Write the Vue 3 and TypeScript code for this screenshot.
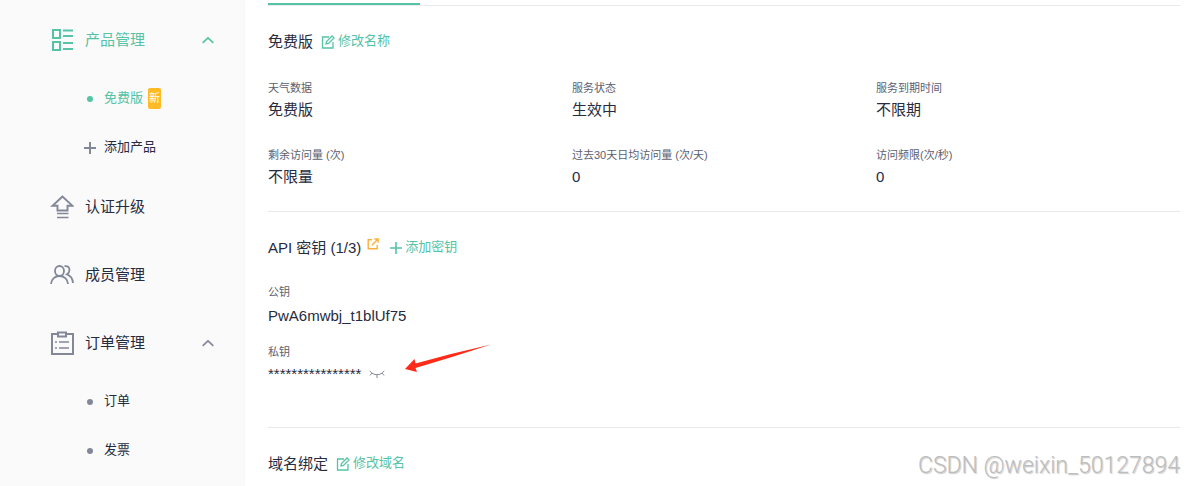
<script setup lang="ts">
interface SubItem {
  label: string
  active?: boolean
  add?: boolean
  badge?: string
}
interface MenuItem {
  label: string
  icon: 'product' | 'upgrade' | 'members' | 'orders'
  active?: boolean
  children?: SubItem[]
}

const menu: MenuItem[] = [
  {
    label: '产品管理',
    icon: 'product',
    active: true,
    children: [
      { label: '免费版', active: true, badge: '新' },
      { label: '添加产品', add: true },
    ],
  },
  { label: '认证升级', icon: 'upgrade' },
  { label: '成员管理', icon: 'members' },
  { label: '订单管理', icon: 'orders', children: [{ label: '订单' }, { label: '发票' }] },
]

const stats = [
  { label: '天气数据', value: '免费版' },
  { label: '服务状态', value: '生效中' },
  { label: '服务到期时间', value: '不限期' },
  { label: '剩余访问量 (次)', value: '不限量' },
  { label: '过去30天日均访问量 (次/天)', value: '0' },
  { label: '访问频限(次/秒)', value: '0' },
]
</script>

<template>
  <div class="page">
    <nav class="sidebar">
      <div v-for="item in menu" :key="item.label" class="group">
        <button type="button" class="item" :class="{ active: item.active }">
          <svg class="item-icon" viewBox="0 0 24 24" width="24" height="24" fill="none" stroke="currentColor" stroke-width="2">
            <template v-if="item.icon === 'product'">
              <path d="M3 2h7v8H3zM3 14h7v8H3z" />
              <path d="M13 2.500h10M13 8h10M13 15h10M13 21h10" stroke-width="1.800" />
            </template>
            <template v-else-if="item.icon === 'upgrade'">
              <path d="M12.500 1.500 2.500 10.800h5v4.700h10v-4.700h5z" stroke-width="1.900" />
              <path d="M7 18.500h11.500M7 22.500h11.500" stroke-width="1.700" />
            </template>
            <template v-else-if="item.icon === 'members'">
              <g stroke-width="1.800">
                <ellipse cx="9.500" cy="8" rx="4.500" ry="5" />
                <path d="M1 21c.3-5 4-8 8.500-8s8.200 3 8.500 8M14.500 3.200c3-.7 5 1 5 3.800 0 2-.9 3.300-2.500 4.300 3.400 1.200 5.700 4.500 6 8.700" />
              </g>
            </template>
            <template v-else>
              <path d="M8 3H2v20h21V3H16" />
              <path d="M8 1.500h8v4H8z" />
              <path d="M5 11h2M9 11h10M5 17h2M9 17h10" stroke-width="1.700" />
            </template>
          </svg>
          <span class="item-text">{{ item.label }}</span>
          <svg v-if="item.children" class="chevron" viewBox="0 0 12 8" width="12" height="8" fill="none" stroke="currentColor" stroke-width="1.700">
            <path d="m.7 6.800 5.300-5 5.300 5" />
          </svg>
        </button>
        <ul v-if="item.children" class="sub">
          <li v-for="child in item.children" :key="child.label">
            <a href="#" class="sub-item" :class="{ active: child.active }">
              <span class="marker">
                <svg v-if="child.add" viewBox="0 0 12 12" width="12" height="12" stroke="currentColor" stroke-width="2">
                  <path d="M6 0v12M0 6h12" />
                </svg>
                <svg v-else viewBox="0 0 6 6" width="6" height="6"><circle cx="3" cy="3" r="3" fill="currentColor" /></svg>
              </span>
              <span class="item-text">{{ child.label }}</span>
              <span v-if="child.badge" class="badge">{{ child.badge }}</span>
            </a>
          </li>
        </ul>
      </div>
    </nav>

    <main class="content">
      <div class="tabs"><div class="indicator"></div></div>

      <section class="section">
        <div class="heading">
          <h2>免费版</h2>
          <button type="button" class="action">
            <svg viewBox="0 0 14 14" width="14" height="14" fill="none" stroke="currentColor" stroke-width="1.300">
              <path d="M8 2H1.500v11H12V7" />
              <path d="m5 9 .5-2.500 5.500-5.500 2 2-5.500 5.500z" />
            </svg>
            <span class="action-text">修改名称</span>
          </button>
        </div>
        <dl class="stats">
          <div v-for="stat in stats" :key="stat.label">
            <dt>{{ stat.label }}</dt>
            <dd>{{ stat.value }}</dd>
          </div>
        </dl>
      </section>

      <section class="section keys">
        <div class="heading">
          <h2>API 密钥 (1/3)</h2>
          <a href="#" class="external" aria-label="API">
            <svg viewBox="0 0 12 12" width="12" height="12" fill="none" stroke="currentColor" stroke-width="1.400">
              <path d="M5 1.700H1.200v9.100h9V7M4.800 7.200 10.800 1.200M7.300 1h3.800v3.800" />
            </svg>
          </a>
          <button type="button" class="action add">
            <svg viewBox="0 0 12 12" width="12" height="12" stroke="currentColor" stroke-width="1.600">
              <path d="M6 0v12M0 6h12" />
            </svg>
            <span class="action-text">添加密钥</span>
          </button>
        </div>
        <dl class="key-list">
          <dt>公钥</dt>
          <dd class="public">PwA6mwbj_t1blUf75</dd>
          <dt>私钥</dt>
          <dd class="secret">
            <span>****************</span>
            <button type="button" class="reveal" aria-label="私钥">
              <svg viewBox="0 0 16 8" width="16" height="8" fill="none" stroke="currentColor" stroke-width="1">
                <path d="M.8.800c3.400 5.200 11 5.200 14.400 0M3 3 1 5.500M8 5v3M13 3l2 2.500" />
              </svg>
            </button>
            <svg class="arrow" viewBox="0 0 86 30" width="86" height="30">
              <path d="M0 25 9.500 15 10.500 19.500Q48 9 86 .5Q48 13 10.500 24L12 28z" fill="#ff2a18" />
            </svg>
          </dd>
        </dl>
      </section>

      <section class="section last">
        <div class="heading">
          <h2>域名绑定</h2>
          <button type="button" class="action">
            <svg viewBox="0 0 14 14" width="14" height="14" fill="none" stroke="currentColor" stroke-width="1.300">
              <path d="M8 2H1.500v11H12V7" />
              <path d="m5 9 .5-2.500 5.500-5.500 2 2-5.500 5.500z" />
            </svg>
            <span class="action-text">修改域名</span>
          </button>
        </div>
      </section>
    </main>
    <div class="watermark">CSDN @weixin_50127894</div>
  </div>
</template>

<style>
body {
  margin: 0;
  background: #fff;
}
</style>

<style scoped>
.page {
  position: relative;
  display: flex;
  min-height: 100vh;
  overflow: hidden;
  font-family: "Liberation Sans", "Noto Sans CJK SC", sans-serif;
  font-size: 15px;
  color: #262b40;
}
button {
  padding: 0;
  border: 0;
  background: none;
  font: inherit;
  color: inherit;
  cursor: pointer;
}
a {
  color: inherit;
  text-decoration: none;
}
svg {
  display: block;
  flex: none;
}
h2, dl, dd, ul {
  margin: 0;
  padding: 0;
  font: inherit;
  list-style: none;
}
.sidebar {
  flex: none;
  box-sizing: border-box;
  width: 244px;
  padding-top: 6px;
  background: #fafafa;
  box-shadow: 0 0 2px rgba(0, 0, 0, 0.1);
}
.item {
  display: flex;
  align-items: center;
  box-sizing: border-box;
  width: 100%;
  height: 68px;
  padding: 0 30px 0 50px;
}
.item-icon {
  margin-right: 11px;
  color: #838899;
}
.item-text {
  padding-bottom: 4px;
}
.chevron {
  margin-left: auto;
  color: #838899;
}
.active,
.active .item-icon,
.active .chevron,
.active .marker {
  color: #54c3a6;
}
.sub {
  padding-bottom: 1px;
}
.sub-item {
  display: flex;
  align-items: center;
  height: 49px;
  padding-left: 83px;
  font-size: 13px;
}
.marker {
  display: flex;
  justify-content: center;
  width: 13px;
  margin-right: 8px;
  color: #838899;
}
.badge {
  width: 13px;
  margin-left: 5px;
  border-radius: 2px;
  background: #ffba26;
  color: #fff;
  font-size: 11px;
  line-height: 21px;
  text-align: center;
}
.content {
  flex: 1;
  min-width: 0;
  padding: 0 4px 0 24px;
}
.tabs {
  padding-top: 3px;
  border-bottom: 1px solid #e9e9ef;
}
.indicator {
  width: 152px;
  height: 2px;
  background: #54c3a6;
}
.section {
  padding: 24px 0 22px;
}
.section + .section {
  border-top: 1px solid #e9e9e9;
}
.heading {
  display: flex;
  align-items: center;
  height: 20px;
}
.action {
  display: flex;
  align-items: center;
  gap: 3px;
  margin-left: 8px;
  padding-top: 4px;
  font-size: 13px;
  line-height: 18px;
  color: #54c3a6;
}
.action-text {
  padding-bottom: 2px;
}
.heading .external {
  align-self: flex-start;
  margin-left: 6px;
  padding-top: 2px;
  color: #fbb03b;
}
.add {
  margin-left: 11px;
}
.stats {
  display: grid;
  grid-template-columns: repeat(3, 1fr);
  row-gap: 23px;
  margin-top: 28px;
}
dt {
  font-size: 11px;
  line-height: 20px;
  color: #5b6070;
}
dd {
  line-height: 24px;
}
.key-list {
  margin-top: 26px;
}
.public {
  padding: 2px 0 14px;
}
.secret {
  position: relative;
  display: flex;
  align-items: center;
}
.reveal {
  margin-left: 8px;
  color: #838899;
}
.arrow {
  position: absolute;
  top: -18px;
  left: 137px;
}
.section.keys {
  padding-bottom: 41px;
}
.section.last {
  padding-bottom: 0;
}
.watermark {
  position: absolute;
  right: 4px;
  bottom: 6px;
  font-family: Roboto, sans-serif;
  font-size: 23px;
  font-weight: 300;
  line-height: 28px;
  color: #bdbdbd;
  text-shadow: 1px 1px 1px #ccc;
}
</style>
